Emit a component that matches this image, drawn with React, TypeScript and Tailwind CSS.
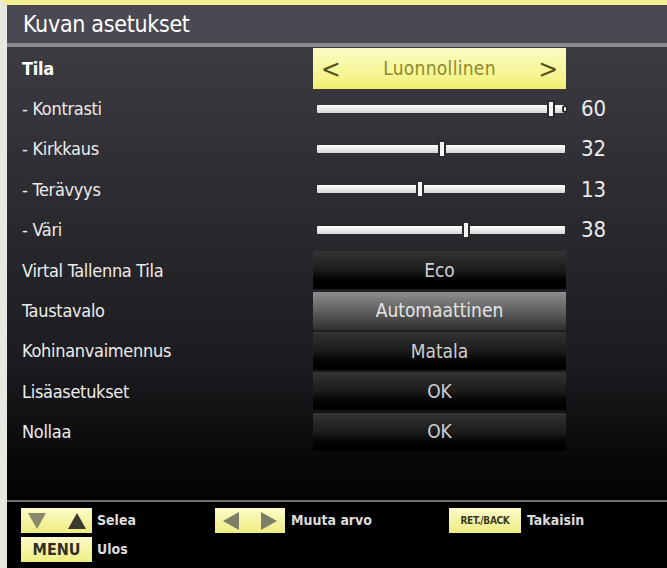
import React from "react";

const font = { fontFamily: '"DejaVu Sans Condensed", "Liberation Sans", sans-serif' };

type Row =
  | { kind: "mode"; label: string; value: string }
  | { kind: "slider"; label: string; value: number; pos: number; dot?: boolean }
  | { kind: "button"; label: string; value: string; active?: boolean };

const rows: Row[] = [
  { kind: "mode", label: "Tila", value: "Luonnollinen" },
  { kind: "slider", label: "- Kontrasti", value: 60, pos: 234, dot: true },
  { kind: "slider", label: "- Kirkkaus", value: 32, pos: 125 },
  { kind: "slider", label: "- Terävyys", value: 13, pos: 103 },
  { kind: "slider", label: "- Väri", value: 38, pos: 149 },
  { kind: "button", label: "Virtal Tallenna Tila", value: "Eco" },
  { kind: "button", label: "Taustavalo", value: "Automaattinen", active: true },
  { kind: "button", label: "Kohinanvaimennus", value: "Matala" },
  { kind: "button", label: "Lisäasetukset", value: "OK" },
  { kind: "button", label: "Nollaa", value: "OK" },
];

function Slider({ pos, dot }: { pos: number; dot?: boolean }) {
  return (
    <div className="relative mx-[4px] h-[8px] w-[248px] rounded-[1px] bg-gradient-to-b from-[#ffffff] to-[#d6d6d6]">
      <div
        className="absolute top-[-5px] h-[18px] w-[8px] rounded-[2px] border-2 border-[#2b2a2e] bg-[#f4f4f4]"
        style={{ left: pos - 4 }}
      />
      {dot && <div className="absolute top-[0px] right-[-3px] h-[8px] w-[6px] rounded-full border-2 border-[#2b2a2e] bg-[#f4f4f4]" />}
    </div>
  );
}

function Control({ row }: { row: Row }) {
  if (row.kind === "mode") {
    return (
      <div className="flex h-[41px] items-center justify-between bg-gradient-to-b from-[#fbfbc4] via-[#f7f7a0] to-[#f2ef6e] px-[8px] text-[#55531a]">
        <span className="text-[26px] leading-none">&lt;</span>
        <span className="text-[19px] tracking-[0.3px] text-[#8c8a2a]">{row.value}</span>
        <span className="text-[26px] leading-none">&gt;</span>
      </div>
    );
  }
  if (row.kind === "slider") return <Slider pos={row.pos} dot={row.dot} />;
  return (
    <div
      className={
        row.active
          ? "flex h-[38px] items-center justify-center bg-gradient-to-b from-[#8e8e8e] via-[#606060] to-[#303030] text-[19px] text-[#e4e4e4]"
          : "flex h-[38px] items-center justify-center bg-gradient-to-b from-[#343434] via-[#1c1c1c] to-[#000000] text-[19px] text-[#d0d0d0]"
      }
    >
      {row.value}
    </div>
  );
}

function Tri({ dir, color }: { dir: "up" | "down" | "left" | "right"; color: string }) {
  const pts = {
    up: "0,16 9,0 18,16",
    down: "0,0 18,0 9,16",
    left: "16,0 16,18 0,9",
    right: "0,0 16,9 0,18",
  }[dir];
  const vb = dir === "up" || dir === "down" ? "0 0 18 16" : "0 0 16 18";
  return (
    <svg viewBox={vb} className={dir === "up" || dir === "down" ? "h-[16px] w-[18px]" : "h-[18px] w-[16px]"}>
      <polygon points={pts} fill={color} />
    </svg>
  );
}

function Key({ children, w }: { children: React.ReactNode; w: string }) {
  return (
    <div className={`flex h-[25px] items-center justify-center gap-[22px] bg-gradient-to-b from-[#fbfbc8] to-[#eeec7e] ${w}`}>
      {children}
    </div>
  );
}

export default function App() {
  return (
    <div
      className="h-[568px] w-[667px] overflow-hidden border-t-[5px] border-l-[7px] border-t-[#f3ef94] border-l-[#e8e8e1] bg-black"
      style={font}
    >
      <div className="flex h-full flex-col">
        <div className="flex h-[38px] items-center bg-[#4a4952] pl-[16px] text-[23px] tracking-[-0.3px] text-white">Kuvan asetukset</div>
        <div className="h-[4px] bg-[#8b8a90]" />
        <div className="h-[453px] bg-gradient-to-b from-[#3c3b41] via-[#1c1b1f] via-70% to-[#030304] pt-[1px]">
          {rows.map((row, i) => (
            <div key={i} className="grid h-[40.4px] grid-cols-[291px_253px_auto] items-center pl-[15px]">
              <span
                className={
                  row.kind === "mode"
                    ? "text-[18px] font-bold tracking-[-0.3px] text-white"
                    : "text-[18px] tracking-[-0.3px] text-[#ececec]"
                }
              >
                {row.label}
              </span>
              <Control row={row} />
              {row.kind === "slider" && <span className="pl-[15px] text-[22px] text-[#ececec]">{row.value}</span>}
            </div>
          ))}
        </div>
        <div className="h-[2px] bg-[#6e6e6e]" />
        <div className="flex flex-col gap-[4px] pt-[6px] pl-[14px] text-[14px] font-bold text-[#dcdcdc]">
          <div className="flex items-center">
            <Key w="w-[71px]">
              <Tri dir="down" color="#8a8a6a" />
              <Tri dir="up" color="#3a3a30" />
            </Key>
            <span className="ml-[5px] w-[118px]">Selea</span>
            <Key w="w-[70px]">
              <Tri dir="left" color="#7d7d68" />
              <Tri dir="right" color="#7d7d68" />
            </Key>
            <span className="ml-[6px] w-[158px]">Muuta arvo</span>
            <div className="flex h-[25px] w-[72px] items-center justify-center bg-gradient-to-b from-[#fbfbc8] to-[#eeec7e] text-[10px] font-bold tracking-[-0.3px] text-[#3a3a20]">
              RET./BACK
            </div>
            <span className="ml-[6px]">Takaisin</span>
          </div>
          <div className="flex items-center">
            <div className="flex h-[25px] w-[71px] items-center justify-center bg-gradient-to-b from-[#fbfbc8] to-[#eeec7e] text-[16px] font-bold text-[#2e2e22]">
              MENU
            </div>
            <span className="ml-[5px]">Ulos</span>
          </div>
        </div>
      </div>
    </div>
  );
}
